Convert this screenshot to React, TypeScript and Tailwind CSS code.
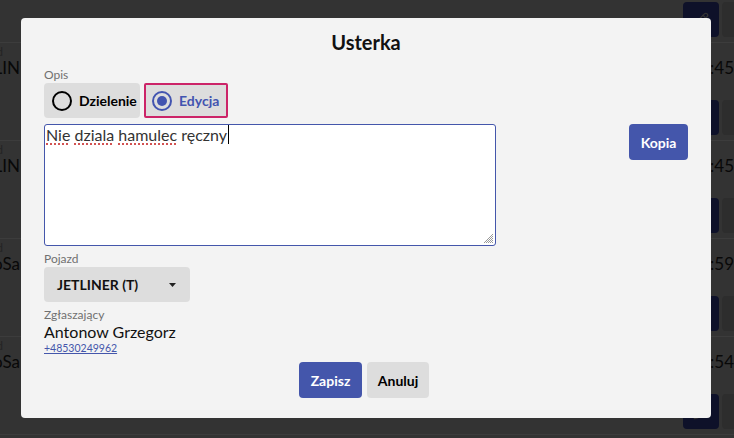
import { Pencil } from "lucide-react";

const rows = [
  { label: "Pojazd", name: "JETLIN", time: "12:45" },
  { label: "Pojazd", name: "JETLIN", time: "12:45" },
  { label: "Pojazd", name: "JETLIN", time: "11:45" },
  { label: "Pojazd", name: "AutoSa", time: "10:59" },
  { label: "Pojazd", name: "AutoSa", time: "10:54" },
  { label: "Pojazd", name: "JETLIN", time: "09:30" },
];

function RadioIcon({ checked }: { checked: boolean }) {
  const color = checked ? "#4254b0" : "#000";
  return (
    <svg width="24" height="24" viewBox="0 0 24 24" className="shrink-0">
      <circle cx="12" cy="12" r="9" fill="none" stroke={color} strokeWidth="2" />
      {checked ? <circle cx="12" cy="12" r="5" fill={color} /> : null}
    </svg>
  );
}

function BackgroundList() {
  return (
    <div className="-mt-[56px]">
      {rows.map((row, i) => (
        <div key={i} className="flex h-[98px] border-t border-[#3c3c3c]">
          <div className="flex w-[20px] shrink-0 flex-col items-end whitespace-nowrap">
            <span className="mr-[17px] pt-[2px] text-[11px] leading-[13px] text-[#232323]">
              {row.label}
            </span>
            <span className="text-[17px] leading-[20px] text-[#080808]">{row.name}</span>
          </div>
          <div className="ml-auto flex w-[51px] shrink-0 flex-col pt-[15px]">
            <span className="text-right text-[17px] leading-[20px] whitespace-nowrap text-[#080808]">
              {row.time}
            </span>
            <div className="mt-[22px] flex gap-[3px]">
              <div className="flex h-[35px] w-9 shrink-0 items-center justify-center rounded-[4px] bg-[#0e1129]">
                <Pencil size={16} color="#333" />
              </div>
              <div className="h-[35px] w-9 shrink-0 rounded-[4px] bg-[#2d2d2d]" />
            </div>
          </div>
        </div>
      ))}
    </div>
  );
}

function Spell({ children }: { children: React.ReactNode }) {
  return (
    <span className="underline decoration-[#c41a1a] decoration-dotted underline-offset-[3px]">
      {children}
    </span>
  );
}

export default function App() {
  return (
    <div className="relative h-[438px] w-[734px] overflow-hidden bg-[#333333] [font-family:Lato,sans-serif]">
      <BackgroundList />

      <div className="absolute left-[21px] top-[18px] flex w-[690px] flex-col rounded-[4px] bg-[#f3f3f3] px-[23px] pt-[12px] pb-[20px]">
        <h2 className="text-center text-[20px] font-bold leading-[25px] text-[#111]">Usterka</h2>

        <div className="mt-[12px] text-[12px] leading-4 text-[#707070]">Opis</div>
        <div className="flex gap-[4px]">
          <div className="flex h-[35px] w-[96px] items-center gap-[5px] rounded-[4px] bg-[#dddddd] pl-[6px]">
            <RadioIcon checked={false} />
            <span className="text-[14px] font-bold text-black">Dzielenie</span>
          </div>
          <div className="flex h-[35px] w-[84px] items-center gap-[5px] rounded-[2px] border-2 border-[#cc2468] bg-[#dddddd] pl-[4px]">
            <RadioIcon checked />
            <span className="text-[14px] font-bold text-[#4254b0]">Edycja</span>
          </div>
        </div>

        <div className="mt-[6px] flex items-start justify-between">
          <div className="relative h-[122px] w-[452px] rounded-[3px] border border-[#4456ab] bg-white pl-px text-[16px] leading-[19px] text-[#333]">
            <Spell>Nie</Spell> <Spell>dziala</Spell> <Spell>hamulec</Spell> ręczny
            <span className="ml-px inline-block h-[19px] w-px bg-black align-top" />
            <svg width="11" height="11" viewBox="0 0 11 11" className="absolute bottom-px right-px">
              <path d="M10 1 L1 10 M10 3 L3 10 M10 5 L5 10 M10 7 L7 10 M10 9 L9 10" stroke="#9a9a9a" strokeWidth="1" />
            </svg>
          </div>
          <button className="h-9 w-[59px] rounded-[4px] bg-[#4456ab] text-[14px] font-bold text-white">
            Kopia
          </button>
        </div>

        <div className="mt-[5px] text-[12px] leading-4 text-[#707070]">Pojazd</div>
        <div className="flex h-[35px] w-[146px] items-center justify-between rounded-[4px] bg-[#dddddd] pl-[13px] pr-[14px]">
          <span className="text-[14px] font-bold text-[#111]">JETLINER (T)</span>
          <svg width="7" height="4" viewBox="0 0 7 4">
            <path d="M0 0 L7 0 L3.5 4 Z" fill="#222" />
          </svg>
        </div>

        <div className="mt-[5px] text-[12px] leading-4 text-[#707070]">Zgłaszający</div>
        <div className="text-[16px] leading-[18px] text-[#111]">Antonow Grzegorz</div>
        <a className="w-fit text-[10.5px] leading-[14px] text-[#4456ab] underline" href="#">
          +48530249962
        </a>

        <div className="mt-[7px] flex justify-center gap-[5px] pr-[4px]">
          <button className="h-9 w-[63px] rounded-[4px] bg-[#4456ab] text-[14px] font-bold text-white">
            Zapisz
          </button>
          <button className="h-9 w-[62px] rounded-[4px] bg-[#dddddd] text-[14px] font-bold text-black">
            Anuluj
          </button>
        </div>
      </div>
    </div>
  );
}
